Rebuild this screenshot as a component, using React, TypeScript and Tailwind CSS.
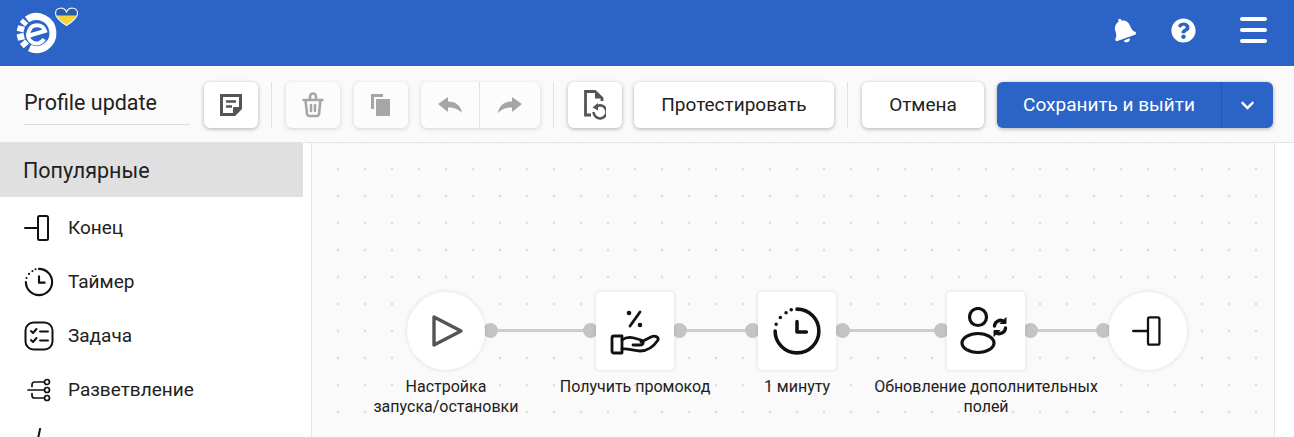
import { FaBell, FaChevronDown, FaQuestionCircle } from "react-icons/fa";

const cardBtn = "flex items-center justify-center h-[46px] bg-white rounded-md shadow-[0_1px_4px_rgba(0,0,0,0.3)]";
const divider = "w-px h-[46px] bg-[#e2e2e2] ml-[13px] mr-[14px]";

function EndIcon({ size = 28 }: { size?: number }) {
  return (
    <svg width={size} height={size} viewBox="0 0 28 28" fill="none" stroke="#111" strokeWidth="2" strokeLinecap="round" strokeLinejoin="round">
      <path d="M1 14h13" />
      <rect x="14" y="2" width="10" height="24" rx="1.5" />
    </svg>
  );
}

function TimerIcon({ size = 28 }: { size?: number }) {
  return (
    <svg width={size} height={size} viewBox="0 0 48 48" fill="none" stroke="#111" strokeWidth="3.4" strokeLinecap="round" strokeLinejoin="round">
      <path d="M24 3a21 21 0 1 1-21 21" />
      <path d="M4 17.5v0M8 11v0M13.5 6.500v0M18.5 3.600v0" />
      <path d="M24 15v10h9" />
    </svg>
  );
}

function TaskIcon() {
  return (
    <svg width="30" height="30" viewBox="0 0 30 30" fill="none" stroke="#111" strokeWidth="2" strokeLinecap="round" strokeLinejoin="round">
      <rect x="1.500" y="1.500" width="27" height="27" rx="8" />
      <path d="M7 10l2 2 3.500-4M7 19l2 2 3.500-4M16 10.500h8M16 19.500h8" />
    </svg>
  );
}

function BranchIcon() {
  return (
    <svg width="24" height="24" viewBox="0 0 24 24" fill="none" stroke="#111" strokeWidth="1.700" strokeLinecap="round">
      <path d="M1 12h17M17 4H7.500A2.500 2.500 0 0 0 5 6.500v2M5 15.500v2A2.500 2.500 0 0 0 7.500 20H17" />
      <circle cx="20" cy="4" r="2.500" fill="#fff" />
      <circle cx="20" cy="12" r="2.500" fill="#fff" />
      <circle cx="20" cy="20" r="2.500" fill="#fff" />
    </svg>
  );
}

function PromoIcon() {
  return (
    <svg width="50" height="48" viewBox="0 0 50 48" fill="none" stroke="#111" strokeWidth="2.800" strokeLinecap="round" strokeLinejoin="round">
      <circle cx="19" cy="6" r="2.300" fill="#111" stroke="none" />
      <circle cx="30" cy="18" r="2.300" fill="#111" stroke="none" />
      <path d="M30 5L20 19" />
      <path d="M4 29h8v17H4a2 2 0 0 1-2-2V31a2 2 0 0 1 2-2z" />
      <path d="M12 33c4-3 8-3 12-2l7 2c3 1 3 5-1 5h-7" />
      <path d="M31 35l10-5c4-2 8 0 7 3-4 6-10 11-18 11-6 0-12-3-18-2" />
    </svg>
  );
}

function UserSyncIcon() {
  return (
    <svg width="52" height="48" viewBox="0 0 52 48" fill="none" stroke="#111" strokeWidth="3.200" strokeLinecap="round" strokeLinejoin="round">
      <circle cx="18" cy="10" r="8.500" />
      <ellipse cx="18" cy="36" rx="16" ry="9.500" />
      <path d="M34.500 19a6 6 0 0 1 9.500-4.500M45.500 21a6 6 0 0 1-9.500 4.500" strokeWidth="3.400" />
      <path d="M46 11v5.500h-5.500zM34 29v-5.500h5.500z" fill="#111" strokeWidth="1" />
    </svg>
  );
}

function Logo() {
  return (
    <svg width="84" height="60" viewBox="0 0 84 60">
      <defs>
        <clipPath id="heart">
          <path d="M66.500 12C64 6.500 55.500 7 55.500 13.500C55.500 18 61 22 66.500 25.500C72 22 77.500 18 77.500 13.500C77.500 7 69 6.500 66.500 12Z" />
        </clipPath>
      </defs>
      <g fill="none" stroke="#fff" strokeWidth="7">
        <path d="M27 19.500A16.500 16.500 0 1 1 29.500 48" />
        <path d="M26.300 46L22.500 41.700M21.500 40L20 33.600M20.100 31.600L21.500 26M22.500 24.300L25.500 20.700" />
      </g>
      <path d="M29.500 35.500L45 31A8.500 8.500 0 0 0 29 31A8.500 8.500 0 0 0 44 39" fill="none" stroke="#fff" strokeWidth="4" />
      <g clipPath="url(#heart)">
        <rect x="54" y="5" width="26" height="10.500" fill="#2a5da8" />
        <rect x="54" y="15.500" width="26" height="12" fill="#f4d63c" />
      </g>
      <path d="M66.500 12C64 6.500 55.500 7 55.500 13.500C55.500 18 61 22 66.500 25.500C72 22 77.500 18 77.500 13.500C77.500 7 69 6.500 66.500 12Z" fill="none" stroke="#e8eef8" strokeWidth="1.200" />
    </svg>
  );
}

const sideItems = [
  { label: "Конец", icon: <div className="-ml-[3px]"><EndIcon /></div> },
  { label: "Таймер", icon: <TimerIcon size={32} /> },
  { label: "Задача", icon: <TaskIcon /> },
  { label: "Разветвление", icon: <BranchIcon /> },
];

function Port({ x }: { x: number }) {
  return <div className="absolute top-[180px] w-[15px] h-[15px] rounded-full bg-[#c4c4c4]" style={{ left: x - 312 - 7.5 }} />;
}

function Line({ from, to }: { from: number; to: number }) {
  return <div className="absolute top-[186px] h-[3px] bg-[#cdcdcd]" style={{ left: from - 312, width: to - from }} />;
}

function Node({ x, round, children }: { x: number; round?: boolean; children: React.ReactNode }) {
  return (
    <div
      className={`absolute top-[149px] w-[78px] h-[78px] bg-white flex items-center justify-center shadow-[0_0_3px_2px_rgba(0,0,0,0.05)] ${round ? "rounded-full" : "rounded"}`}
      style={{ left: x - 312 - 39 }}
    >
      {children}
    </div>
  );
}

function Label({ x, children }: { x: number; children: React.ReactNode }) {
  return (
    <div className="absolute top-[234px] w-[260px] text-center text-[16px] leading-[20px] text-[#212121]" style={{ left: x - 312 - 130 }}>
      {children}
    </div>
  );
}

export default function App() {
  return (
    <div className="w-[1294px] h-[437px] overflow-hidden bg-white font-['Roboto',sans-serif] text-[#212121]">
      <header className="h-[66px] bg-[#2b63c7] flex items-start justify-between">
        <Logo />
        <div className="flex items-center h-[60px] pr-[27px] text-white">
          <FaBell size={25} className="-rotate-[20deg] mr-[35px]" />
          <FaQuestionCircle size={25} className="mr-[44px]" />
          <div className="flex flex-col gap-[7px]">
            <span className="block w-[27px] h-1 rounded bg-white" />
            <span className="block w-[27px] h-1 rounded bg-white" />
            <span className="block w-[27px] h-1 rounded bg-white" />
          </div>
        </div>
      </header>

      <div className="mt-0.5 h-[75px] bg-[#fafafa] border-b border-[#e4e4e4] flex items-center pl-6 pr-[21px]">
        <div className="w-[166px] h-[40px] mr-[14px] border-b border-[#dcdcdc] text-[21.5px] leading-[36px]">Profile update</div>
        <button className={`${cardBtn} w-[54px]`}>
          <svg width="24" height="24" viewBox="0 0 24 24" fill="none" stroke="#555" strokeWidth="3">
            <path d="M2.500 2.500h19v13l-6 6h-13z" />
            <path d="M7 8.500h10M7 13.500h6" strokeWidth="2.400" />
            <path d="M14.500 21.500v-7h7" fill="#555" strokeWidth="1" />
          </svg>
        </button>
        <div className={divider} />
        <button className={`${cardBtn} w-[54px] opacity-50`}>
          <svg width="22" height="26" viewBox="0 0 22 26" fill="none" stroke="#555" strokeWidth="2.600" strokeLinecap="round" strokeLinejoin="round">
            <path d="M1.500 8h19M8 7.500V4.500a3 3 0 0 1 6 0v3M3.500 8l1.500 14a2.500 2.500 0 0 0 2.500 2h7a2.500 2.500 0 0 0 2.500-2l1.500-14M9 13v6M13 13v6" />
          </svg>
        </button>
        <button className={`${cardBtn} w-[54px] ml-[14px] opacity-50`}>
          <svg width="20" height="22" viewBox="0 0 20 22" fill="#555">
            <path d="M0 0h12v3H3v12H0z" />
            <rect x="5" y="5" width="14" height="17" />
          </svg>
        </button>
        <div className={`${cardBtn} w-[119px] ml-[13px] opacity-50`}>
          <div className="w-[59px] h-full flex items-center justify-center border-r border-[#cfcfcf]">
            <svg width="24" height="16" viewBox="0 0 24 16" fill="#555">
              <path d="M0 7L10 0V4.500C18 4.500 23 9 24 16C20 12 16 10.500 10 10.500V15Z" />
            </svg>
          </div>
          <div className="flex-1 h-full flex items-center justify-center">
            <svg width="24" height="16" viewBox="0 0 24 16" fill="#555">
              <path d="M24 7L14 0V4.500C6 4.500 1 9 0 16C4 12 8 10.500 14 10.500V15Z" />
            </svg>
          </div>
        </div>
        <div className={divider} />
        <button className={`${cardBtn} w-[54px]`}>
          <svg width="22" height="30" viewBox="0 0 22 30" fill="none" stroke="#555" strokeWidth="2.800">
            <path d="M7 25H1.500V1.500H11L18 8V11" />
            <path d="M11 1.500L18 8.500H11z" fill="#555" stroke="none" />
            <path d="M9.500 22a6.500 6.500 0 1 0 2.500-5.200" strokeWidth="2.600" />
            <path d="M8.500 17.500L14 13v7.500z" fill="#555" stroke="none" />
          </svg>
        </button>
        <button className={`${cardBtn} w-[200px] ml-3 text-[19px]`}>Протестировать</button>
        <div className={divider} />
        <button className={`${cardBtn} w-[122px] text-[19px]`}>Отмена</button>
        <div className="flex h-[46px] w-[276px] ml-[13px] bg-[#2b63c7] rounded-md text-white text-[19px] shadow-[0_1px_4px_rgba(0,0,0,0.3)]">
          <button className="flex-1 flex items-center justify-center border-r border-[#2455ad]">Сохранить и выйти</button>
          <button className="w-[51px] flex items-center justify-center">
            <FaChevronDown size={15} />
          </button>
        </div>
      </div>

      <div className="flex h-[294px]">
        <aside className="w-[312px] shrink-0 bg-white border-r border-[#e4e4e4]">
          <div className="w-[303px] h-[54px] bg-[#e0e0e0] pl-[23px] text-[21.5px] leading-[56px]">Популярные</div>
          <div className="pt-1">
            {sideItems.map((item) => (
              <div key={item.label} className="h-[54px] flex items-center text-[19px]">
                <div className="w-[30px] ml-6 mr-3.5 flex justify-center">{item.icon}</div>
                {item.label}
              </div>
            ))}
          </div>
          <div className="ml-[38px] pt-[11px]">
            <div className="w-0.5 h-3 bg-[#111] rotate-12" />
          </div>
        </aside>
        <main className="relative w-[963px] h-full border-r border-[#e4e4e4] bg-[#fafafa] bg-[radial-gradient(circle,#acacac_0.7px,transparent_1.1px)] bg-[length:27px_27px] bg-[position:12.500px_12.500px]">
          <Line from={490} to={590} />
          <Line from={679} to={752} />
          <Line from={842} to={941} />
          <Line from={1030} to={1103} />
          <Port x={490} />
          <Port x={590} />
          <Port x={679} />
          <Port x={752} />
          <Port x={842} />
          <Port x={941} />
          <Port x={1030} />
          <Port x={1103} />
          <Node x={446} round>
            <svg width="34" height="34" viewBox="0 0 34 34" fill="none" stroke="#555" strokeWidth="3.400" strokeLinejoin="round" className="ml-1">
              <path d="M3 3l27 14L3 31z" />
            </svg>
          </Node>
          <Node x={635}><PromoIcon /></Node>
          <Node x={797}><TimerIcon size={50} /></Node>
          <Node x={986}><UserSyncIcon /></Node>
          <Node x={1148} round><EndIcon size={32} /></Node>
          <Label x={446}>Настройка<br />запуска/остановки</Label>
          <Label x={635}>Получить промокод</Label>
          <Label x={797}>1 минуту</Label>
          <Label x={986}>Обновление дополнительных<br />полей</Label>
        </main>
      </div>
    </div>
  );
}
